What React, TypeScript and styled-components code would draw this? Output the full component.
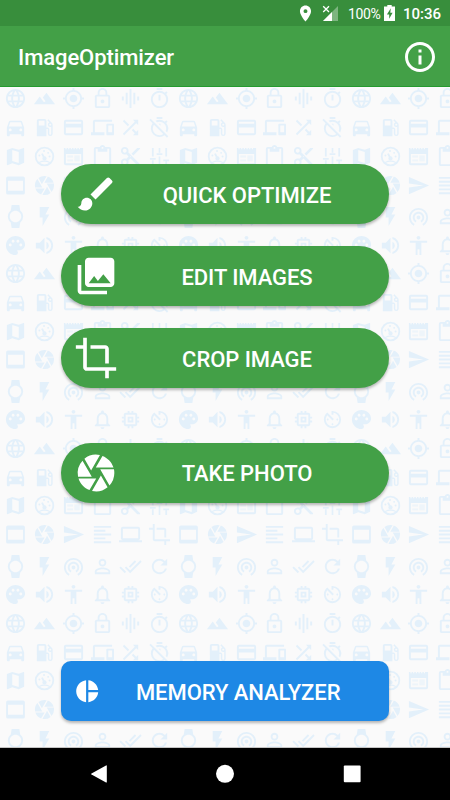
import React from 'react';
import styled, { createGlobalStyle } from 'styled-components';
import type { IconType } from 'react-icons';
import {
  MdLanguage, MdTerrain, MdMyLocation, MdLockOutline, MdGraphicEq, MdOutlineTimer,
  MdDirectionsCar, MdLocalGasStation, MdPayment, MdDevices, MdShuffle, MdOutlineTimerOff,
  MdContentPaste, MdContentCut, MdCamera, MdSend, MdFormatAlignLeft, MdLaptop, MdCrop,
  MdWatch, MdFlashOn, MdWifiTethering, MdPersonOutline, MdDoneAll, MdRefresh,
  MdPalette, MdVolumeUp, MdAccessibility, MdNotificationsNone, MdMemory, MdAvTimer,
  MdBrush, MdPhotoLibrary, MdPieChart, MdInfoOutline, MdPlace,
} from 'react-icons/md';

const GlobalStyle = createGlobalStyle`
  * { box-sizing: border-box; }
  body { margin: 0; font-family: Roboto, "Liberation Sans", sans-serif; }
`;

const Screen = styled.div`
  width: 450px;
  height: 800px;
  display: flex;
  flex-direction: column;
  overflow: hidden;
  background: #fafafa;
`;

const StatusBar = styled.div`
  height: 26px;
  flex: none;
  display: flex;
  align-items: center;
  justify-content: flex-end;
  padding: 1px 8px 0 0;
  background: #388e3c;
  color: #fff;
`;

const PinIcon = styled(MdPlace)`
  width: 19px;
  height: 19px;
  margin: 0 7px 1px 0;
`;

const SignalIcon = styled.svg`
  width: 16px;
  height: 16px;
  margin: 0 10px 1px 0;
`;

const BatteryText = styled.span`
  width: 31px;
  margin-right: 5px;
  padding-top: 1px;
  font-size: 14px;
  line-height: 24px;
  letter-spacing: -0.4px;
  white-space: nowrap;
`;

const BatteryIcon = styled.svg`
  width: 11px;
  height: 16px;
  margin: 0 8px 1px 0;
`;

const Clock = styled.span`
  width: 39px;
  padding-top: 1px;
  font-size: 15px;
  font-weight: 500;
  line-height: 24px;
  white-space: nowrap;
`;

const AppBar = styled.header`
  height: 61px;
  flex: none;
  display: flex;
  align-items: center;
  justify-content: space-between;
  padding: 0 13px 0 18px;
  background: #43a047;
  border-bottom: 1px solid #259a2f;
  color: #fff;
`;

const Title = styled.h1`
  margin: 0;
  padding-top: 4px;
  font-size: 22px;
  font-weight: 500;
  line-height: 30px;
  letter-spacing: -0.08px;
`;

const InfoIcon = styled(MdInfoOutline)`
  width: 36px;
  height: 36px;
  margin: 1px -1px 0 0;
`;

const Main = styled.main`
  position: relative;
  height: 661px;
  flex: none;
  overflow: hidden;
  border-bottom: 1px solid #c4c4c4;
`;

const Pattern = styled.div`
  position: absolute;
  inset: -2.4px 0 0 1.3px;
  color: #e3f0fa;
`;

const PatternRow = styled.div<{ $gap: boolean }>`
  display: flex;
  height: 28.7px;
  align-items: center;
  margin-top: ${(p) => (p.$gap ? '2.7px' : '0')};
`;

const PatternCell = styled.span`
  width: 28.8px;
  flex: none;
  display: flex;
  justify-content: center;

  svg {
    width: 23px;
    height: 23px;
  }
`;

const Actions = styled.div`
  position: relative;
  display: flex;
  flex-direction: column;
  padding: 77px 61px 0;
`;

const ActionButton = styled.button<{ $tone?: string; $radius?: number; $before?: number; $iconSize?: number }>`
  display: flex;
  align-items: center;
  width: 328px;
  height: 60px;
  margin: ${(p) => p.$before ?? 0}px 0 0;
  padding: 0 13px;
  border: 0;
  border-radius: ${(p) => p.$radius ?? 30}px;
  background: ${(p) => p.$tone ?? '#43a047'};
  box-shadow: 0 2px 3px rgba(0, 0, 0, 0.28);
  color: #fff;
  font: 500 22px/60px Roboto, "Liberation Sans", sans-serif;

  svg {
    width: ${(p) => p.$iconSize ?? 44}px;
    height: ${(p) => p.$iconSize ?? 44}px;
    flex: none;
  }
`;

const Label = styled.span`
  flex: 1;
  padding-top: 3px;
  text-align: center;
  white-space: nowrap;
  letter-spacing: -0.06px;
`;

const NavBar = styled.nav`
  height: 52px;
  flex: none;
  display: flex;
  align-items: center;
  justify-content: space-between;
  padding: 0 88.5px;
  background: #000;

  svg {
    width: 20px;
    height: 20px;
    fill: #fff;
  }
`;

const FoldedMap = () => (
  <svg viewBox="0 0 24 24" fill="currentColor">
    <path fillRule="evenodd" d="M3 5.2 8.6 3l6.8 2 5-2q.6-.1.6.5v15.1l-5.6 2.4-6.8-2-5 2q-.6.1-.6-.5zM8.6 5.2v11.6l6.8 2.1V7.3z" />
  </svg>
);

const Gauge = () => (
  <svg viewBox="0 0 24 24" fill="none" stroke="currentColor" strokeWidth="1.9">
    <circle cx="12" cy="12" r="9.2" />
    <path d="M12 14 9.4 9" strokeWidth="2" />
    <path d="M6.5 18.2q5.5-2.6 11 0" strokeWidth="1.2" />
    <g fill="currentColor" stroke="none">
      <circle cx="12" cy="14" r="2.2" />
      <circle cx="11.5" cy="6.2" r="1" />
      <circle cx="6.7" cy="11" r="1" />
      <circle cx="15.8" cy="8.2" r="1" />
      <circle cx="17.3" cy="12" r="1" />
    </g>
  </svg>
);

const Planner = () => (
  <svg viewBox="0 0 24 24" fill="currentColor">
    <path fillRule="evenodd" d="M2 3h1.6v1.4h1.2V3h1.6v1.4h1.2V3h1.6v1.4h1.2V3h1.6v1.4h1.2V3h1.6v1.4h1.2V3h1.6v1.4h1.2V3H22v16a2 2 0 0 1-2 2H4a2 2 0 0 1-2-2zM4 9.5V19h16V9.5z" />
    <path d="M5.5 11h6v2h-6zM13 11h5.5v6H13zM5.5 15h6v2h-6z" opacity=".55" />
  </svg>
);

const Sliders = () => (
  <svg viewBox="0 0 24 24" fill="none" stroke="currentColor" strokeWidth="1.8">
    <path d="M5 3v9M5 16v6M12 3v5M12 12v10M19 3v9M19 16v6M2 14.5h6M9 9.5h6M16 16h6" />
  </svg>
);

const WindowGlyph = () => (
  <svg viewBox="0 0 24 24" fill="currentColor">
    <path fillRule="evenodd" d="M4.2 2.5h15.6a2 2 0 0 1 2 2v15a2 2 0 0 1-2 2H4.2a2 2 0 0 1-2-2v-15a2 2 0 0 1 2-2zM4.2 7v10.5h15.6V7z" />
  </svg>
);

type Glyph = IconType | React.FC;

const patternRows: Glyph[][] = [
  [MdLanguage, MdTerrain, MdMyLocation, MdLockOutline, MdGraphicEq, MdOutlineTimer],
  [MdDirectionsCar, MdLocalGasStation, MdPayment, MdDevices, MdShuffle, MdOutlineTimerOff],
  [FoldedMap, Gauge, Planner, MdContentPaste, MdContentCut, Sliders],
  [WindowGlyph, MdCamera, MdSend, MdFormatAlignLeft, MdLaptop, MdCrop],
  [MdWatch, MdFlashOn, MdWifiTethering, MdPersonOutline, MdDoneAll, MdRefresh],
  [MdPalette, MdVolumeUp, MdAccessibility, MdNotificationsNone, MdMemory, MdAvTimer],
];

const IconPattern = () => (
  <Pattern aria-hidden>
    {Array.from({ length: 23 }, (_, row) => (
      <PatternRow key={row} $gap={row % 6 === 4}>
        {Array.from({ length: 16 }, (_, col) => {
          const Icon = patternRows[row % 6][col % 6];
          return (
            <PatternCell key={col}>
              <Icon />
            </PatternCell>
          );
        })}
      </PatternRow>
    ))}
  </Pattern>
);

export default function App() {
  return (
    <>
      <GlobalStyle />
      <Screen>
        <StatusBar>
          <PinIcon />
          <SignalIcon viewBox="0 0 16 16">
            <path d="M16 1v15H1z" fill="#fff" opacity=".35" />
            <path d="M10 7v9H1z" fill="#fff" />
            <path d="M1.2 1.2 7 7M7 1.2 1.2 7" stroke="#fff" strokeWidth="1.3" />
          </SignalIcon>
          <BatteryText>100%</BatteryText>
          <BatteryIcon viewBox="0 0 11 16">
            <path fillRule="evenodd" fill="#fff" d="M3.3 0h4.4v1.5H11V16H0V1.5h3.3zM6.8 3.2 2.9 9.4h2.3v4.4l3.4-6.1H6.3z" />
          </BatteryIcon>
          <Clock>10:36</Clock>
        </StatusBar>
        <AppBar>
          <Title>ImageOptimizer</Title>
          <InfoIcon />
        </AppBar>
        <Main>
          <IconPattern />
          <Actions>
            <ActionButton><MdBrush /><Label>QUICK OPTIMIZE</Label></ActionButton>
            <ActionButton $before={22}><MdPhotoLibrary /><Label>EDIT IMAGES</Label></ActionButton>
            <ActionButton $before={22}><MdCrop /><Label>CROP IMAGE</Label></ActionButton>
            <ActionButton $before={54.5}><MdCamera /><Label>TAKE PHOTO</Label></ActionButton>
            <ActionButton $before={158.5} $tone="#1e88e5" $radius={10} $iconSize={26.4}>
              <MdPieChart /><Label>MEMORY ANALYZER</Label>
            </ActionButton>
          </Actions>
        </Main>
        <NavBar>
          <svg viewBox="0 0 20 20"><path d="M17.8 2v16q0 .8-.8.4L2.5 10.6q-.9-.6 0-1.2L17 1.4q.8-.3.8.6z" /></svg>
          <svg viewBox="0 0 20 20"><circle cx="10" cy="9.8" r="9" /></svg>
          <svg viewBox="0 0 20 20"><rect x="1.8" y="1.4" width="16.8" height="16.8" rx="1" /></svg>
        </NavBar>
      </Screen>
    </>
  );
}
